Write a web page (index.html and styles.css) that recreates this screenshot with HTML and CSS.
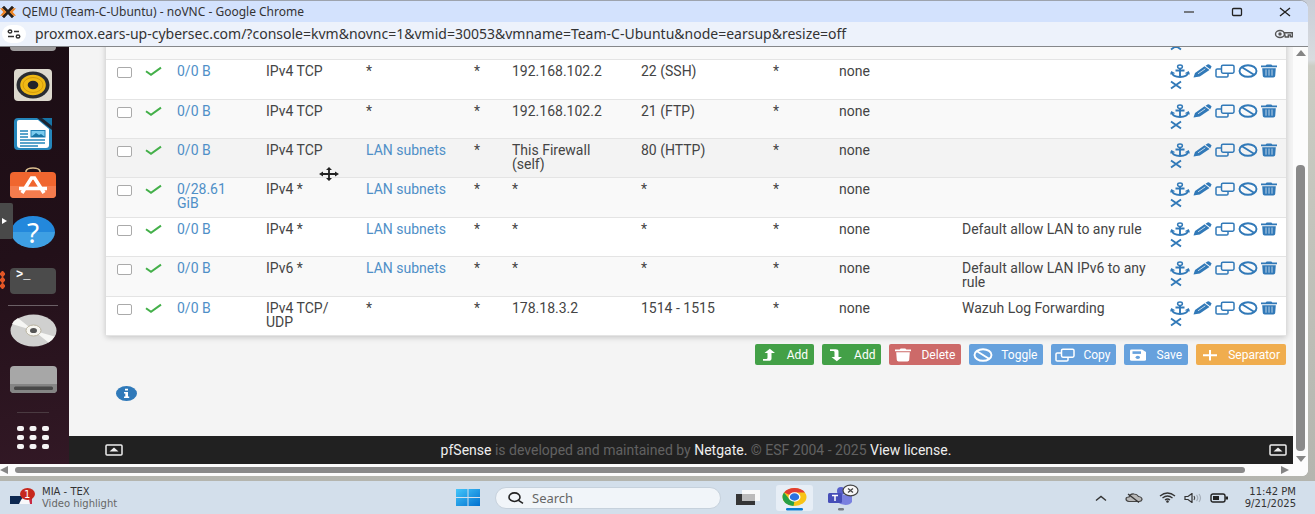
FILE: index.html
```html
<!DOCTYPE html>
<html lang="en">
<head>
<meta charset="utf-8">
<title>QEMU (Team-C-Ubuntu) - noVNC - Google Chrome</title>
<link rel="stylesheet" href="styles.css">
</head>
<body>
<svg class="sprite" aria-hidden="true">
  <symbol id="anchor" viewBox="0 0 20 14"><path d="M10 5v8M5.500 6.500h9M1.500 8.200c.8 3 4 4.600 8.500 4.800 4.500-.2 7.700-1.800 8.500-4.800" fill="none" stroke="currentColor" stroke-width="1.900"/><path d="M0 10.500 1.300 7l4 2.300zM20 10.500 18.700 7l-4 2.300z" fill="currentColor"/><ellipse cx="10" cy="2.800" rx="2.400" ry="1.700" fill="none" stroke="currentColor" stroke-width="1.500"/></symbol>
  <symbol id="pencil" viewBox="0 0 19 14"><path d="M.5 13.500 2 9 11.500 2.300l5 3.600L6.800 12.600z" fill="currentColor"/><path d="m12.500 1.800 2-1.300q.8-.5 1.700 0l2 1.400q.8.7 0 1.400l-1 2z" fill="currentColor"/><path d="m5 9.800 7.300-5" stroke="#fff" stroke-width=".7"/></symbol>
  <symbol id="clone" viewBox="0 0 20 14"><g fill="none" stroke="currentColor" stroke-width="1.500"><rect x="6.500" y="1.200" width="12.500" height="8" rx="1.400"/><path d="M6 5H2.300Q1 5 1 6v6q0 1 1.300 1h9.400q1.300 0 1.300-1V9.500"/></g></symbol>
  <symbol id="ban" viewBox="0 0 20 14"><ellipse cx="10" cy="7" rx="8.500" ry="5.800" fill="none" stroke="currentColor" stroke-width="1.900"/><path d="m4 3.200 12 7.600" stroke="currentColor" stroke-width="1.900"/></symbol>
  <symbol id="trash" viewBox="0 0 16 14"><path d="M0 1.600h4.600L5.700.6h4.600l1.100 1H16v1.600H0zM1.200 4.200h13.600L14.200 12q-.1 1.400-1.800 1.400H3.600Q1.900 13.400 1.800 12z" fill="currentColor"/><path d="M5 5.500v6.200M8 5.500v6.200M11 5.500v6.200" stroke="#fff" stroke-opacity=".75" stroke-width=".9"/></symbol>
  <symbol id="times" viewBox="0 0 12 14"><path d="M1 3.500 11 10.500M11 3.500 1 10.500" stroke="currentColor" stroke-width="1.900"/></symbol>
  <symbol id="check" viewBox="0 0 17 14"><path d="m1 7.200 5 3.600L16 3.600" fill="none" stroke="currentColor" stroke-width="2"/></symbol>
  <symbol id="turn" viewBox="0 0 14 14"><path d="M1 12.800V11h3.200q1.300 0 1.300-1.200V5H2.500L7.800.8 13 5H9.500v5.500q0 2.300-2.800 2.300z" fill="currentColor"/></symbol>
  <symbol id="disk" viewBox="0 0 17 14"><path d="M2 1.500h10.500L16.500 4v7.500q0 1.300-1.500 1.300H2Q.5 12.800.5 11.500v-8.700Q.5 1.500 2 1.500z" fill="currentColor"/><path d="M3 3.300h8.500v2.600H3z" fill="#66a1dd"/><ellipse cx="8.300" cy="9.300" rx="2.200" ry="1.600" fill="#66a1dd"/></symbol>
  <symbol id="plus" viewBox="0 0 15 14"><path d="M7.500 2v10.500M.5 7.200h14" stroke="currentColor" stroke-width="2"/></symbol>
  <symbol id="caret-box" viewBox="0 0 18 12"><rect x="1" y="1" width="16" height="10" rx="1" fill="none" stroke="currentColor" stroke-width="1.500"/><path d="m4.500 7.500 4.500-4 4.500 4z" fill="currentColor"/></symbol>
</svg>

<div class="desktop">
  <main class="window">
    <header class="titlebar">
      <svg class="app-icon" viewBox="0 0 16 12" aria-hidden="true"><path d="M3 .8 13 11.200M13 .8 3 11.200" stroke="#27211e" stroke-width="3"/><path d="M0 2.200h2.700L6.500 6l-3.800 3.800H0L3.300 6zM16 2.200h-2.700L9.500 6l3.800 3.800H16L12.700 6z" fill="#ee8424"/></svg>
      <h1 class="title">QEMU (Team-C-Ubuntu) - noVNC - Google Chrome</h1>
      <div class="window-buttons">
        <button aria-label="Minimize"><svg width="12" height="10" viewBox="0 0 12 10"><path d="M1 5h10" stroke="#555" stroke-width="1.500"/></svg></button>
        <button aria-label="Maximize"><svg width="12" height="10" viewBox="0 0 12 10"><rect x="1.500" y="1.500" width="9" height="7" rx="1" fill="none" stroke="#222" stroke-width="1.300"/></svg></button>
        <button aria-label="Close"><svg width="12" height="10" viewBox="0 0 12 10"><path d="m1 1 10 8M11 1 1 9" stroke="#222" stroke-width="1.400"/></svg></button>
      </div>
    </header>
    <div class="address">
      <button class="site-info" aria-label="Site information"><svg width="14" height="10" viewBox="0 0 14 10"><g fill="none" stroke="#333" stroke-width="1.400"><ellipse cx="3" cy="2.500" rx="1.800" ry="1.500"/><path d="M7 2.500h5M1 7.500h6"/><ellipse cx="11" cy="7.500" rx="1.800" ry="1.500"/></g></svg></button>
      <span class="url">proxmox.ears-up-cybersec.com/?console=kvm&amp;novnc=1&amp;vmid=30053&amp;vmname=Team-C-Ubuntu&amp;node=earsup&amp;resize=off</span>
      <button class="key" aria-label="Passwords"><svg width="20" height="10" viewBox="0 0 20 10"><g fill="none" stroke="#555" stroke-width="1.400"><ellipse cx="6" cy="5" rx="4.500" ry="3.500"/><path d="M10.300 3.700h8v4h-2V6h-2v2h-3z"/></g><circle cx="6" cy="5" r="1.700" fill="#555"/></svg></button>
    </div>

    <div class="view">
      <div class="remote">
        <nav class="dock" aria-label="Dock">
          <div class="dock-top"></div>
          <a class="dock-item" href="#" aria-label="Rhythmbox"><svg width="38" height="32" viewBox="0 0 38 32"><rect width="38" height="32" rx="4" fill="#ddd9ce"/><ellipse cx="19" cy="16" rx="16.500" ry="13.500" fill="#292c32"/><ellipse cx="19" cy="16" rx="12.800" ry="10.300" fill="#efb915"/><ellipse cx="19" cy="16" rx="10" ry="7.500" fill="none" stroke="#d59b0a"/><ellipse cx="19" cy="16" rx="5.300" ry="4.200" fill="#23242a"/></svg></a>
          <a class="dock-item" href="#" aria-label="LibreOffice Writer"><svg width="38" height="32" viewBox="0 0 38 32"><rect width="38" height="32" rx="4" fill="#2586bb"/><path d="M5 2h19l11 9v16q0 3-3 3H6q-3 0-3-3V4q0-2 2-2z" fill="#fff"/><path d="M23 0h11q4 0 4 4v8z" fill="#1b2330"/><path d="M28 0h10v8z" fill="#1774a6"/><path d="M6 13h8M6 16h8M6 19h8M6 22h25M6 25h25M6 28h18" stroke="#2586bb" stroke-width="1.600"/><rect x="17" y="12.500" width="14" height="6.500" fill="#7acbee" stroke="#2180b4"/><path d="m17 19 5-4 3 2 2-1 4 3z" fill="#1674a5"/></svg></a>
          <a class="dock-item" href="#" aria-label="Ubuntu Software"><svg width="46" height="31" viewBox="0 0 46 31"><path d="M16 6V4q1-3 7-3t7 3v2" fill="none" stroke="#d9bd8e" stroke-width="1.600"/><rect y="5" width="46" height="26" rx="4" fill="#f0662f"/><path d="M0 19h46v8q0 4-4 4H4q-4 0-4-4z" fill="#f47c4e"/><path d="m12 26 9.500-15h3L34 26M9 21.500h28" fill="none" stroke="#fff" stroke-width="3.600"/></svg></a>
          <a class="dock-item" href="#" aria-label="Help"><span class="help">?</span></a>
          <a class="dock-item running" href="#" aria-label="Terminal"><span class="terminal">&gt;_</span></a>
          <hr class="dock-line">
          <a class="dock-item" href="#" aria-label="Disc"><svg width="47" height="33" viewBox="0 0 47 33"><ellipse cx="23.500" cy="16.500" rx="23" ry="16" fill="#d0d0cf"/><path d="M23.500 16.500 2 10Q4 6 8 4zM23.500 16.500l21 6q-2 4-6 6z" fill="#f6f6f4"/><ellipse cx="23.500" cy="16.500" rx="7.500" ry="5.500" fill="#f7f6f1" stroke="#b8b29f"/><ellipse cx="23.500" cy="16.500" rx="3.500" ry="2.600" fill="#555"/></svg></a>
          <a class="dock-item" href="#" aria-label="Drive"><svg width="47" height="27" viewBox="0 0 47 27"><rect width="47" height="27" rx="4" fill="#a7a7a7"/><path d="M0 18h47v5q0 4-4 4H4q-4 0-4-4z" fill="#858585"/><rect x="4" y="20.500" width="39" height="3.500" rx="1.500" fill="#484848"/></svg></a>
          <hr class="dock-line faint">
          <a class="dock-item" href="#" aria-label="Show applications"><svg width="32" height="24" viewBox="0 0 32 24"><g fill="#f5f3f4"><rect width="7" height="5" rx="2"/><rect x="12.500" width="7" height="5" rx="2"/><rect x="25" width="7" height="5" rx="2"/><rect y="9" width="7" height="5" rx="2"/><rect x="12.500" y="9" width="7" height="5" rx="2"/><rect x="25" y="9" width="7" height="5" rx="2"/><rect y="18" width="7" height="5" rx="2"/><rect x="12.500" y="18" width="7" height="5" rx="2"/><rect x="25" y="18" width="7" height="5" rx="2"/></g></svg></a>
          <button class="vnc-handle" aria-label="Open noVNC controls"><svg width="5" height="6" viewBox="0 0 5 6"><path d="m0 0 5 3-5 3z" fill="#fff"/></svg></button>
        </nav>

        <div class="page">
          <div class="content">
            <table class="rules" aria-label="Firewall rules">
              <colgroup><col class="c-box"><col class="c-state"><col class="c-bytes"><col class="c-proto"><col class="c-source"><col class="c-port"><col class="c-dest"><col class="c-dport"><col class="c-gate"><col class="c-queue"><col class="c-desc"><col class="c-act"></colgroup>
              <tbody>
                <tr><td></td><td></td><td></td><td></td><td></td><td></td><td></td><td></td><td></td><td></td><td></td><td><div class="actions"><a href="#" aria-label="Move"><svg class="w20"><use href="#anchor"/></svg></a><a href="#" aria-label="Edit"><svg class="w19"><use href="#pencil"/></svg></a><a href="#" aria-label="Copy"><svg class="w20"><use href="#clone"/></svg></a><a href="#" aria-label="Disable"><svg class="w20"><use href="#ban"/></svg></a><a href="#" aria-label="Delete"><svg class="w16"><use href="#trash"/></svg></a><a href="#" aria-label="Kill states"><svg class="w12"><use href="#times"/></svg></a></div></td></tr>
                <tr><td><input type="checkbox" aria-label="Select SSH rule"></td><td><svg class="pass"><use href="#check"/></svg></td><td><a href="#">0/0 B</a></td><td>IPv4 TCP</td><td>*</td><td>*</td><td>192.168.102.2</td><td>22 (SSH)</td><td>*</td><td>none</td><td></td><td><div class="actions"><a href="#" aria-label="Move"><svg class="w20"><use href="#anchor"/></svg></a><a href="#" aria-label="Edit"><svg class="w19"><use href="#pencil"/></svg></a><a href="#" aria-label="Copy"><svg class="w20"><use href="#clone"/></svg></a><a href="#" aria-label="Disable"><svg class="w20"><use href="#ban"/></svg></a><a href="#" aria-label="Delete"><svg class="w16"><use href="#trash"/></svg></a><a href="#" aria-label="Kill states"><svg class="w12"><use href="#times"/></svg></a></div></td></tr>
                <tr><td><input type="checkbox" aria-label="Select FTP rule"></td><td><svg class="pass"><use href="#check"/></svg></td><td><a href="#">0/0 B</a></td><td>IPv4 TCP</td><td>*</td><td>*</td><td>192.168.102.2</td><td>21 (FTP)</td><td>*</td><td>none</td><td></td><td><div class="actions"><a href="#" aria-label="Move"><svg class="w20"><use href="#anchor"/></svg></a><a href="#" aria-label="Edit"><svg class="w19"><use href="#pencil"/></svg></a><a href="#" aria-label="Copy"><svg class="w20"><use href="#clone"/></svg></a><a href="#" aria-label="Disable"><svg class="w20"><use href="#ban"/></svg></a><a href="#" aria-label="Delete"><svg class="w16"><use href="#trash"/></svg></a><a href="#" aria-label="Kill states"><svg class="w12"><use href="#times"/></svg></a></div></td></tr>
                <tr class="hovered"><td><input type="checkbox" aria-label="Select HTTP rule"></td><td><svg class="pass"><use href="#check"/></svg></td><td><a href="#">0/0 B</a></td><td>IPv4 TCP</td><td><a href="#">LAN subnets</a></td><td>*</td><td class="roomy">This Firewall (self)</td><td>80 (HTTP)</td><td>*</td><td>none</td><td></td><td><div class="actions"><a href="#" aria-label="Move"><svg class="w20"><use href="#anchor"/></svg></a><a href="#" aria-label="Edit"><svg class="w19"><use href="#pencil"/></svg></a><a href="#" aria-label="Copy"><svg class="w20"><use href="#clone"/></svg></a><a href="#" aria-label="Disable"><svg class="w20"><use href="#ban"/></svg></a><a href="#" aria-label="Delete"><svg class="w16"><use href="#trash"/></svg></a><a href="#" aria-label="Kill states"><svg class="w12"><use href="#times"/></svg></a></div></td></tr>
                <tr><td><input type="checkbox" aria-label="Select LAN rule"></td><td><svg class="pass"><use href="#check"/></svg></td><td class="roomy"><a href="#">0/28.61 GiB</a></td><td>IPv4 *</td><td><a href="#">LAN subnets</a></td><td>*</td><td>*</td><td>*</td><td>*</td><td>none</td><td></td><td><div class="actions"><a href="#" aria-label="Move"><svg class="w20"><use href="#anchor"/></svg></a><a href="#" aria-label="Edit"><svg class="w19"><use href="#pencil"/></svg></a><a href="#" aria-label="Copy"><svg class="w20"><use href="#clone"/></svg></a><a href="#" aria-label="Disable"><svg class="w20"><use href="#ban"/></svg></a><a href="#" aria-label="Delete"><svg class="w16"><use href="#trash"/></svg></a><a href="#" aria-label="Kill states"><svg class="w12"><use href="#times"/></svg></a></div></td></tr>
                <tr><td><input type="checkbox" aria-label="Select default LAN rule"></td><td><svg class="pass"><use href="#check"/></svg></td><td><a href="#">0/0 B</a></td><td>IPv4 *</td><td><a href="#">LAN subnets</a></td><td>*</td><td>*</td><td>*</td><td>*</td><td>none</td><td>Default allow LAN to any rule</td><td><div class="actions"><a href="#" aria-label="Move"><svg class="w20"><use href="#anchor"/></svg></a><a href="#" aria-label="Edit"><svg class="w19"><use href="#pencil"/></svg></a><a href="#" aria-label="Copy"><svg class="w20"><use href="#clone"/></svg></a><a href="#" aria-label="Disable"><svg class="w20"><use href="#ban"/></svg></a><a href="#" aria-label="Delete"><svg class="w16"><use href="#trash"/></svg></a><a href="#" aria-label="Kill states"><svg class="w12"><use href="#times"/></svg></a></div></td></tr>
                <tr><td><input type="checkbox" aria-label="Select default LAN IPv6 rule"></td><td><svg class="pass"><use href="#check"/></svg></td><td><a href="#">0/0 B</a></td><td>IPv6 *</td><td><a href="#">LAN subnets</a></td><td>*</td><td>*</td><td>*</td><td>*</td><td>none</td><td>Default allow LAN IPv6 to any rule</td><td><div class="actions"><a href="#" aria-label="Move"><svg class="w20"><use href="#anchor"/></svg></a><a href="#" aria-label="Edit"><svg class="w19"><use href="#pencil"/></svg></a><a href="#" aria-label="Copy"><svg class="w20"><use href="#clone"/></svg></a><a href="#" aria-label="Disable"><svg class="w20"><use href="#ban"/></svg></a><a href="#" aria-label="Delete"><svg class="w16"><use href="#trash"/></svg></a><a href="#" aria-label="Kill states"><svg class="w12"><use href="#times"/></svg></a></div></td></tr>
                <tr><td><input type="checkbox" aria-label="Select Wazuh rule"></td><td><svg class="pass"><use href="#check"/></svg></td><td><a href="#">0/0 B</a></td><td class="roomy">IPv4 TCP/<wbr>UDP</td><td>*</td><td>*</td><td>178.18.3.2</td><td>1514 - 1515</td><td>*</td><td>none</td><td>Wazuh Log Forwarding</td><td><div class="actions"><a href="#" aria-label="Move"><svg class="w20"><use href="#anchor"/></svg></a><a href="#" aria-label="Edit"><svg class="w19"><use href="#pencil"/></svg></a><a href="#" aria-label="Copy"><svg class="w20"><use href="#clone"/></svg></a><a href="#" aria-label="Disable"><svg class="w20"><use href="#ban"/></svg></a><a href="#" aria-label="Delete"><svg class="w16"><use href="#trash"/></svg></a><a href="#" aria-label="Kill states"><svg class="w12"><use href="#times"/></svg></a></div></td></tr>
              </tbody>
            </table>
            <div class="toolbar">
              <button class="btn green"><svg class="btn-icon"><use href="#turn"/></svg>Add</button>
              <button class="btn green"><svg class="btn-icon flip"><use href="#turn"/></svg>Add</button>
              <button class="btn red"><svg class="btn-icon"><use href="#trash"/></svg>Delete</button>
              <button class="btn blue"><svg class="btn-icon"><use href="#ban"/></svg>Toggle</button>
              <button class="btn blue"><svg class="btn-icon"><use href="#clone"/></svg>Copy</button>
              <button class="btn blue"><svg class="btn-icon"><use href="#disk"/></svg>Save</button>
              <button class="btn orange"><svg class="btn-icon"><use href="#plus"/></svg>Separator</button>
            </div>
            <button class="info" aria-label="Information"><svg width="21" height="15" viewBox="0 0 21 15"><ellipse cx="10.500" cy="7.500" rx="10.500" ry="7.500" fill="#2f79b9"/><path d="M9 2.800h3v1.800H9zM8 6h4v4.500h1.200V12H8v-1.500h1.300V7.400H8z" fill="#fff"/></svg></button>
          </div>
          <footer class="footer">
            <a href="#" aria-label="Back to top"><svg class="caret-box"><use href="#caret-box"/></svg></a>
            <p><a href="#">pfSense</a> is developed and maintained by <a href="#">Netgate.</a> © ESF 2004 - 2025 <a href="#">View license.</a></p>
            <a href="#" aria-label="Back to top"><svg class="caret-box"><use href="#caret-box"/></svg></a>
          </footer>
        </div>
        <svg class="pointer" viewBox="0 0 20 14" aria-hidden="true"><path d="M10 2v10M3 7h14" stroke="#222" stroke-width="1.800"/><path d="m10 0 3 3H7zM10 14l3-3H7zM0 7l4-2.500v5zM20 7l-4-2.500v5z" fill="#222"/></svg>
      </div>
      <div class="vscroll" aria-hidden="true">
        <svg width="10" height="6" viewBox="0 0 10 6"><path d="m0 6 5-6 5 6z" fill="#858585"/></svg>
        <span class="v-space"></span><span class="v-thumb"></span>
        <svg width="10" height="6" viewBox="0 0 10 6"><path d="m0 0 5 6 5-6z" fill="#858585"/></svg>
      </div>
    </div>
    <div class="hscroll" aria-hidden="true">
      <svg width="8" height="8" viewBox="0 0 8 8"><path d="M8 0 0 4l8 4z" fill="#858585"/></svg>
      <span class="h-thumb"></span><span class="h-space"></span>
      <svg width="8" height="8" viewBox="0 0 8 8"><path d="m0 0 8 4-8 4z" fill="#858585"/></svg>
    </div>
  </main>

  <footer class="taskbar">
    <button class="widget">
      <svg width="27" height="22" viewBox="0 0 27 22" aria-hidden="true"><rect x="2" y="9" width="22" height="8" fill="#0d2850"/><path d="m11 17 2-4 3-4h5l3 8z" fill="#f8f8fa"/><path d="M21 12h3v5h-2z" fill="#c82a43"/><ellipse cx="19.500" cy="7" rx="7.500" ry="6" fill="#c7281d"/><text x="16" y="11" class="count">1</text></svg>
      <span class="widget-text"><span>MIA - TEX</span><span class="sub">Video highlight</span></span>
    </button>
    <div class="apps">
      <button aria-label="Start"><svg width="24" height="17" viewBox="0 0 24 17"><defs><linearGradient id="win" x2="1" y2="1"><stop stop-color="#45c6fa"/><stop offset="1" stop-color="#0070cf"/></linearGradient></defs><path d="M0 0h11.500v8H0zM12.500 0H24v8H12.500zM0 9h11.500v8H0zM12.500 9H24v8H12.500z" fill="url(#win)"/></svg></button>
      <label class="search"><svg width="16" height="12" viewBox="0 0 16 12" aria-hidden="true"><g fill="none" stroke="#222" stroke-width="1.600"><ellipse cx="6.500" cy="5.200" rx="5.500" ry="4.300"/><path d="m10.500 8.300 4.500 3"/></g></svg><input type="search" placeholder="Search" aria-label="Search"></label>
      <button aria-label="Task view"><svg width="25" height="17" viewBox="0 0 25 17"><rect y="5" width="19" height="11" fill="#353535"/><rect x="6" y="1" width="18" height="11" fill="#fafafa" fill-opacity=".95"/><rect x="6" y="5" width="13" height="7" fill="#bbb"/></svg></button>
      <button class="chrome" aria-label="Google Chrome"><svg width="25" height="24" viewBox="0 0 25 24"><ellipse cx="12.500" cy="10" rx="12" ry="9" fill="#f8c316"/><path d="M12.500 10 2 5.500Q5.500 1 12.500 1T23 5.500H12.500z" fill="#e23c32"/><path d="M2 5.500 7.500 12.500 12.500 14l-1 5Q.5 17.500.5 10q0-2.500 1.500-4.500z" fill="#27a047"/><ellipse cx="12.500" cy="10" rx="6" ry="4.700" fill="#fff"/><ellipse cx="12.500" cy="10" rx="4.700" ry="3.700" fill="#2d72df"/><rect x="4" y="21" width="17" height="2.500" rx="1.200" fill="#087bd0"/></svg></button>
      <button aria-label="Microsoft Teams"><svg width="31" height="28" viewBox="0 0 31 28"><circle cx="13" cy="7" r="4" fill="#5860cb"/><path d="M9 11h15v7q-2 3-6.500 3T9 18z" fill="#7980df"/><rect y="9" width="14" height="10" rx="1.500" fill="#464eb8"/><path d="M4 11.500h6M7 11.500V17" stroke="#fff" stroke-width="1.500"/><ellipse cx="22.500" cy="6.500" rx="7.500" ry="5.300" fill="#f8f8f8" stroke="#444" stroke-width="1.200"/><path d="m20 4.500 5 4M25 4.500l-5 4" stroke="#444" stroke-width="1.300"/><rect x="10" y="24" width="6" height="2.500" rx="1.200" fill="#777d83"/></svg></button>
    </div>
    <div class="tray">
      <button aria-label="Show hidden icons"><svg width="12" height="8" viewBox="0 0 12 8"><path d="m1 6.500 5-4 5 4" fill="none" stroke="#333" stroke-width="1.400"/></svg></button>
      <button class="cloud" aria-label="OneDrive"><svg width="18" height="12" viewBox="0 0 18 12"><path d="M4 9.500Q1 9 1 7t3-2q1-3.500 5-3 3 0 4.500 2.500Q17 5 17 7.500q-.5 2-3 2z" fill="#b8b8b8" stroke="#444" stroke-width="1.200"/><path d="m3 2 11 8.500" stroke="#333" stroke-width="1.300"/></svg></button>
      <button class="wifi" aria-label="Network"><svg width="17" height="11" viewBox="0 0 17 11"><g fill="none" stroke="#333" stroke-width="1.300"><path d="M1 4q7.500-6 15 0M3.500 6q5-4 10 0M6 8q2.500-2 5 0"/></g><circle cx="8.500" cy="9.500" r="1.300" fill="#333"/></svg></button>
      <button aria-label="Volume"><svg width="18" height="10" viewBox="0 0 18 10"><g fill="none" stroke-width="1.200"><path d="M1 3.500h3l4-3v9l-4-3H1z" stroke="#333"/><path d="M10 3q1.500 2 0 4" stroke="#444"/><path d="M12.500 2q2.500 3 0 6M15 1q3 4 0 8" stroke="#a7b0ba"/></g></svg></button>
      <button aria-label="Battery"><svg width="18" height="10" viewBox="0 0 18 10"><rect x="1" y="1" width="14" height="8" rx="2" fill="none" stroke="#222" stroke-width="1.400"/><path d="M3 3h6v4H3zM15.500 3.500H18v3h-2.500z" fill="#222"/></svg></button>
      <time class="clock" datetime="2025-09-21T23:42"><span>11:42 PM</span><span>9/21/2025</span></time>
    </div>
  </footer>
</div>
</body>
</html>
```
FILE: styles.css
```css
* { box-sizing: border-box; }
body { margin: 0; font-family: Roboto, "Liberation Sans", sans-serif; font-size: 14px; color: #444; }
button { border: 0; padding: 0; background: none; font: inherit; color: inherit; }
a { color: #4f8fc7; text-decoration: none; }
svg { display: block; flex: none; }
.sprite { position: absolute; width: 0; height: 0; }

.desktop { display: flex; flex-direction: column; gap: 5px; height: 100vh; overflow: hidden; background: linear-gradient(#c9ced8, #d9dcdf 60px, #cccdc4 66px, #b2b3ad); }
.window { flex: 1; min-height: 0; display: flex; flex-direction: column; margin-right: 7px; background: #fff; border-radius: 0 8px 6px 0; overflow: hidden; border-top: 1px solid #9da3ad; }

.titlebar { display: flex; align-items: center; gap: 6px; height: 21px; background: #d3e2fd; color: #333; }
.app-icon { width: 16px; height: 12px; }
.title { flex: 1; margin: 0; font: 400 12px/20px "Noto Sans", sans-serif; white-space: nowrap; }
.window-buttons { display: flex; gap: 36px; padding-right: 17px; }

.address { display: flex; align-items: center; height: 25px; padding: 0 14px 0 2px; background: #edf2fb; border-bottom: 1px solid #85878a; font: 400 14px/22px "Noto Sans", sans-serif; color: #333; }
.site-info { display: grid; place-items: center; width: 24px; height: 18px; margin-right: 9px; border-radius: 12px; background: #fff; }
.url { flex: 1; min-width: 0; overflow: hidden; white-space: nowrap; }

.view { flex: 1; min-height: 0; display: flex; }
.remote { position: relative; flex: 1; min-width: 0; display: flex; overflow: hidden; background: #f4f4f4; }

.dock { position: relative; width: 69px; padding-right: 3px; display: flex; flex-direction: column; align-items: center; background: linear-gradient(170deg, #1b0d14, #221019 50%, #321825); }
.dock-top { width: 46px; height: 4px; margin-bottom: 9px; background: #9d9b9c; border-radius: 0 0 4px 4px; }
.dock-item { position: relative; display: grid; place-items: center; width: 66px; height: 49px; }
.dock-line { width: 50px; height: 1px; margin: 0; border: 0; background: #6b6066; }
.dock-line.faint { width: 32px; margin-top: 8px; background: #4a3a41; }
.help { width: 44px; height: 32px; border-radius: 50%; background: linear-gradient(#2388dc 50%, #3e9fe3 50%); color: #fff; font: 400 28px/32px "Noto Sans", sans-serif; text-align: center; }
.terminal { width: 46px; height: 26px; padding-left: 6px; border-radius: 4px; background: #4b4b4b; color: #fff; font: 700 12px/14px "Liberation Mono", monospace; }
.running::before { content: ""; position: absolute; left: 0; top: 15px; width: 5px; height: 18px; background: radial-gradient(ellipse at center, #e35525 60%, transparent 70%) 0 0 / 5px 6px; }
.vnc-handle { position: absolute; left: 0; top: 156px; display: grid; place-items: center; width: 13px; height: 36px; padding-right: 4px; background: #494949; border-radius: 0 2px 2px 0; }

.page { flex: 1; min-width: 0; display: flex; flex-direction: column; justify-content: flex-end; }
.content { flex: none; padding: 0 7px 35px 37px; }
.rules { width: 100%; height: 315px; table-layout: fixed; border-collapse: collapse; background: #fff; box-shadow: 0 1px 6px rgba(0, 0, 0, .22); }
.rules tr { border-bottom: 1px solid #e4e4e4; }
.rules tr:nth-child(odd) { background: #f9f9f9; }
.rules tr.hovered { background: #f3f3f3; }
.rules td { padding: 4px 5px 0; vertical-align: top; line-height: 14px; }
.rules td:first-child { padding-left: 11px; }
.rules td.roomy { padding-right: 20px; }
.c-box { width: 34px; } .c-state { width: 32px; } .c-bytes { width: 89px; } .c-proto { width: 100px; }
.c-source { width: 108px; } .c-port { width: 38px; } .c-dest { width: 129px; } .c-dport { width: 132px; }
.c-gate { width: 66px; } .c-queue { width: 123px; } .c-act { width: 121px; }
.rules input { appearance: none; display: block; width: 15px; height: 11px; margin: 3px 0 0; border: 1px solid #aaa; border-radius: 2px; background: #fff; }
.pass { width: 17px; height: 14px; color: #44b04a; }
.actions { display: flex; flex-wrap: wrap; column-gap: 3px; }
.actions a { color: #3179b8; }
.actions svg { height: 14px; }
.w20 { width: 20px; } .w19 { width: 19px; } .w16 { width: 16px; } .w12 { width: 12px; }

.toolbar { display: flex; justify-content: flex-end; gap: 8px; padding-top: 8px; }
.btn { display: flex; align-items: center; height: 21px; padding: 0 6px 0 4px; border-radius: 2px; color: #fff; font-size: 12px; line-height: 20px; }
.btn-icon { width: 20px; height: 14px; margin-right: 8px; }
.flip { transform: rotate(180deg) scaleX(-1); }
.green { background: #43a047; } .red { background: #cd6a69; } .blue { background: #66a1dd; } .orange { background: #f0ad4e; }
.info { display: block; margin: 21px 0 0 10px; }

.footer { flex: none; display: flex; align-items: center; justify-content: space-between; height: 28px; padding: 0 6px 0 36px; background: #212121; color: #616161; }
.footer p { margin: 0; line-height: 20px; }
.footer a { color: #eee; }
.caret-box { width: 18px; height: 12px; }
.pointer { position: absolute; left: 319px; top: 120px; width: 20px; height: 14px; }

.vscroll { width: 15px; padding: 3px 0 2px; display: flex; flex-direction: column; align-items: center; background: #fcfcfc; }
.v-space { flex: 109; }
.v-thumb { flex: 286; width: 9px; margin-bottom: 5px; border-radius: 4px; background: #8a8a8a; }
.hscroll { height: 12px; display: flex; align-items: center; padding: 0 19px 0 0; background: #fcfcfc; }
.h-thumb { flex: 1230; height: 6px; margin-left: 7px; border-radius: 3px; background: #8a8a8a; }
.h-space { flex: 36; }

.taskbar { display: grid; grid-template-columns: 1fr auto 1fr; align-items: center; height: 33px; background: #d3dfeb; color: #333; font-family: "DejaVu Sans", sans-serif; font-size: 10px; line-height: 12px; }
.widget { display: flex; align-items: center; gap: 7px; padding-left: 8px; text-align: left; }
.widget-text, .clock { display: flex; flex-direction: column; }
.sub { color: #666; }
.count { font-size: 10px; fill: #fff; }
.apps { display: flex; align-items: center; gap: 15px; }
.search { display: flex; align-items: center; gap: 8px; width: 226px; height: 22px; padding: 0 12px; border-radius: 11px; background: #f1f5f9; border: 1px solid #c6d1dc; }
.search input { flex: 1; min-width: 0; border: 0; padding: 0; background: none; outline: 0; font: 400 13px/18px "Noto Sans", sans-serif; }
.search input::placeholder { color: #666; opacity: 1; }
.chrome { padding: 2px 6px 0; border-radius: 3px; background: #e7eef6; }
.tray { display: flex; align-items: center; justify-content: flex-end; gap: 8px; padding-right: 19px; }
.tray .cloud { margin: 0 8px 0 10px; }
.clock { margin-left: 9px; text-align: right; }
```
